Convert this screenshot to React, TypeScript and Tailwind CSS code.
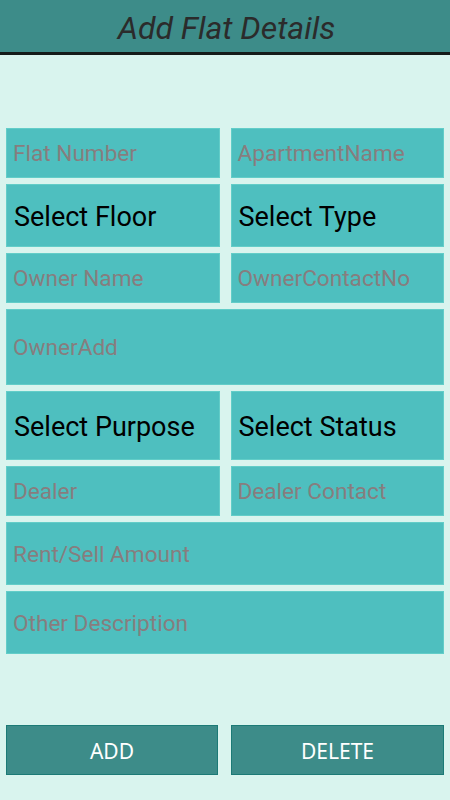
const hint = "text-[22.6px] text-[#877d7e] pt-[3px]";
const sel = "text-[27px] text-black pt-[4px]";

function Field({ label, h, select, wide }: { label: string; h: string; select?: boolean; wide?: boolean }) {
  return (
    <div
      className={`${h} ${wide ? "col-span-2" : ""} flex items-center bg-[#4ebfbf] border border-[#62cdc8] ${select ? "pl-[7px]" : "pl-[6px]"}`}
    >
      <span className={`${select ? sel : hint} leading-none`}>{label}</span>
    </div>
  );
}

export default function App() {
  return (
    <div className="w-[450px] h-[800px] bg-[#d9f4ee] flex flex-col" style={{ fontFamily: "Roboto, sans-serif" }}>
      <div className="h-[55px] bg-[#3d8c89] border-b-[3px] border-[#141a19] flex items-center justify-center">
        <h1 className="text-[32px] italic text-[#2b2b2b] leading-none mt-[4px] ml-[3px]">Add Flat Details</h1>
      </div>

      <div className="mt-[73px] px-[6px] grid grid-cols-2 gap-x-[11px] gap-y-[6px]">
        <Field label="Flat Number" h="h-[50px]" />
        <Field label="ApartmentName" h="h-[50px]" />
        <Field label="Select Floor" h="h-[63px]" select />
        <Field label="Select Type" h="h-[63px]" select />
        <Field label="Owner Name" h="h-[50px]" />
        <Field label="OwnerContactNo" h="h-[50px]" />
        <Field label="OwnerAdd" h="h-[76px]" wide />
        <Field label="Select Purpose" h="h-[69px]" select />
        <Field label="Select Status" h="h-[69px]" select />
        <Field label="Dealer" h="h-[50px]" />
        <Field label="Dealer Contact" h="h-[50px]" />
        <Field label="Rent/Sell Amount" h="h-[63px]" wide />
        <Field label="Other Description" h="h-[63px]" wide />
      </div>

      <div className="mt-[71px] px-[6px] flex gap-[13px]">
        <button className="w-[212px] h-[50px] pt-[3px] bg-[#3d8c89] border border-[#1c7a76] text-white text-[21px]" style={{ fontFamily: "'Noto Sans', sans-serif" }}>
          ADD
        </button>
        <button className="flex-1 h-[50px] pt-[3px] bg-[#3d8c89] border border-[#1c7a76] text-white text-[21px]" style={{ fontFamily: "'Noto Sans', sans-serif" }}>
          DELETE
        </button>
      </div>
    </div>
  );
}
